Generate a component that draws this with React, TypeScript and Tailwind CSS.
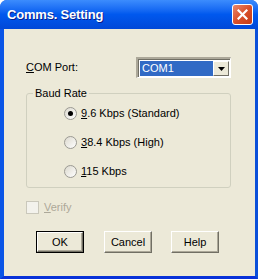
import React from "react";

const ui = "font-['Liberation_Sans',Arial,sans-serif] text-[11px] leading-[13px] text-black";

const Radio = ({ checked, label, hot }: { checked?: boolean; label: string; hot: string }) => {
  return (
    <div className="flex h-[13px] items-center gap-[4px]">
      {/* circle */}
      <span className="flex h-[13px] w-[13px] items-center justify-center rounded-full border border-[#9B9A93] bg-gradient-to-br from-[#DCD9CE] to-white">
        {checked && <span className="h-[5px] w-[5px] rounded-full bg-black" />}
      </span>
      <span>
        <u className="underline-offset-[1px]">{hot}</u>
        {label}
      </span>
    </div>
  );
};

const Button = ({ label, isDefault, className }: { label: string; isDefault?: boolean; className?: string }) => {
  return (
    <div
      className={`h-[22px] w-[48px] ${isDefault ? "border border-black" : ""} ${className ?? ""}`}
    >
      <div className="flex h-full w-full items-center justify-center border-b border-r border-b-[#716F64] border-r-[#716F64] border-l border-t border-l-white border-t-white bg-[#ECE9D8] shadow-[inset_-1px_-1px_0_#ACA899]">
        {label}
      </div>
    </div>
  );
};

export default function App() {
  return (
    <div className={`flex h-[279px] w-[258px] flex-col overflow-hidden rounded-t-[7px] bg-[#0A4FE0] ${ui}`}>
      {/* Title bar */}
      <div className="flex h-[29px] items-center justify-between bg-gradient-to-b from-[#3C8CFD] via-[#0058EE] to-[#0148D8] pl-[7px] pr-[5px]">
        <span className="font-['Liberation_Sans',Arial,sans-serif] text-[13px] font-bold tracking-[-0.2px] text-white [text-shadow:1px_1px_0_#0A1E8A]">
          Comms. Setting
        </span>
        <div className="flex h-[21px] w-[21px] items-center justify-center rounded-[3px] border border-white bg-gradient-to-br from-[#E8866A] via-[#D9502A] to-[#C43B16]">
          <svg width="11" height="11" viewBox="0 0 11 11">
            <path d="M1.5 1.5 L9.5 9.5 M9.5 1.5 L1.5 9.5" stroke="white" strokeWidth="2.2" strokeLinecap="square" />
          </svg>
        </div>
      </div>

      {/* Client area */}
      <div className="flex flex-1 flex-col border-b-[3px] border-l-[4px] border-r-[3px] border-b-[#0831D9] border-l-[#0A55E6] border-r-[#0A4FD9] bg-[#ECE9D8] pl-[22px]">
        {/* COM port row */}
        <div className="mt-[28px] flex h-[21px] w-[205px] items-center justify-between">
          <span>
            <u>C</u>OM Port:
          </span>
          <div className="flex h-[21px] w-[95px] border-b border-r border-b-white border-r-white border-l-2 border-t-2 border-l-[#ACA899] border-t-[#ACA899]">
            <div className="flex flex-1 items-stretch border-l border-t border-l-[#716F64] border-t-[#716F64] bg-white p-[1px] pb-[1px]">
              <div className="flex flex-1 items-center bg-[#316AC5] pl-[2px] text-white">COM1</div>
              <div className="flex w-[16px] items-center justify-center border-b border-r border-b-[#716F64] border-r-[#716F64] border-l border-t border-l-white border-t-white bg-[#ECE9D8]">
                <svg width="7" height="4" viewBox="0 0 7 4">
                  <path d="M0 0 H7 L3.5 4 Z" fill="black" />
                </svg>
              </div>
            </div>
          </div>
        </div>

        {/* Baud rate group */}
        <fieldset className="mt-[9px] w-[205px] rounded-[3px] border border-[#D0D0BF] p-0">
          <legend className="ml-[6px] px-[2px]">Baud Rate</legend>
          <div className="flex flex-col gap-[16px] pb-[9px] pl-[37px] pt-[7px]">
            <Radio checked hot="9" label=".6 Kbps (Standard)" />
            <Radio hot="3" label="8.4 Kbps (High)" />
            <Radio hot="1" label="15 Kbps" />
          </div>
        </fieldset>

        {/* Verify checkbox (disabled) */}
        <div className="mt-[13px] flex h-[13px] items-center gap-[5px] text-[#ACA899]">
          <span className="h-[13px] w-[13px] border border-[#CAC8BB] bg-[#F3F2EC]" />
          <span>
            <u>V</u>erify
          </span>
        </div>

        {/* Buttons */}
        <div className="ml-[10px] mt-[17px] flex">
          <Button label="OK" isDefault />
          <Button label="Cancel" className="ml-[20px]" />
          <Button label="Help" className="ml-[19px]" />
        </div>
      </div>
    </div>
  );
}
